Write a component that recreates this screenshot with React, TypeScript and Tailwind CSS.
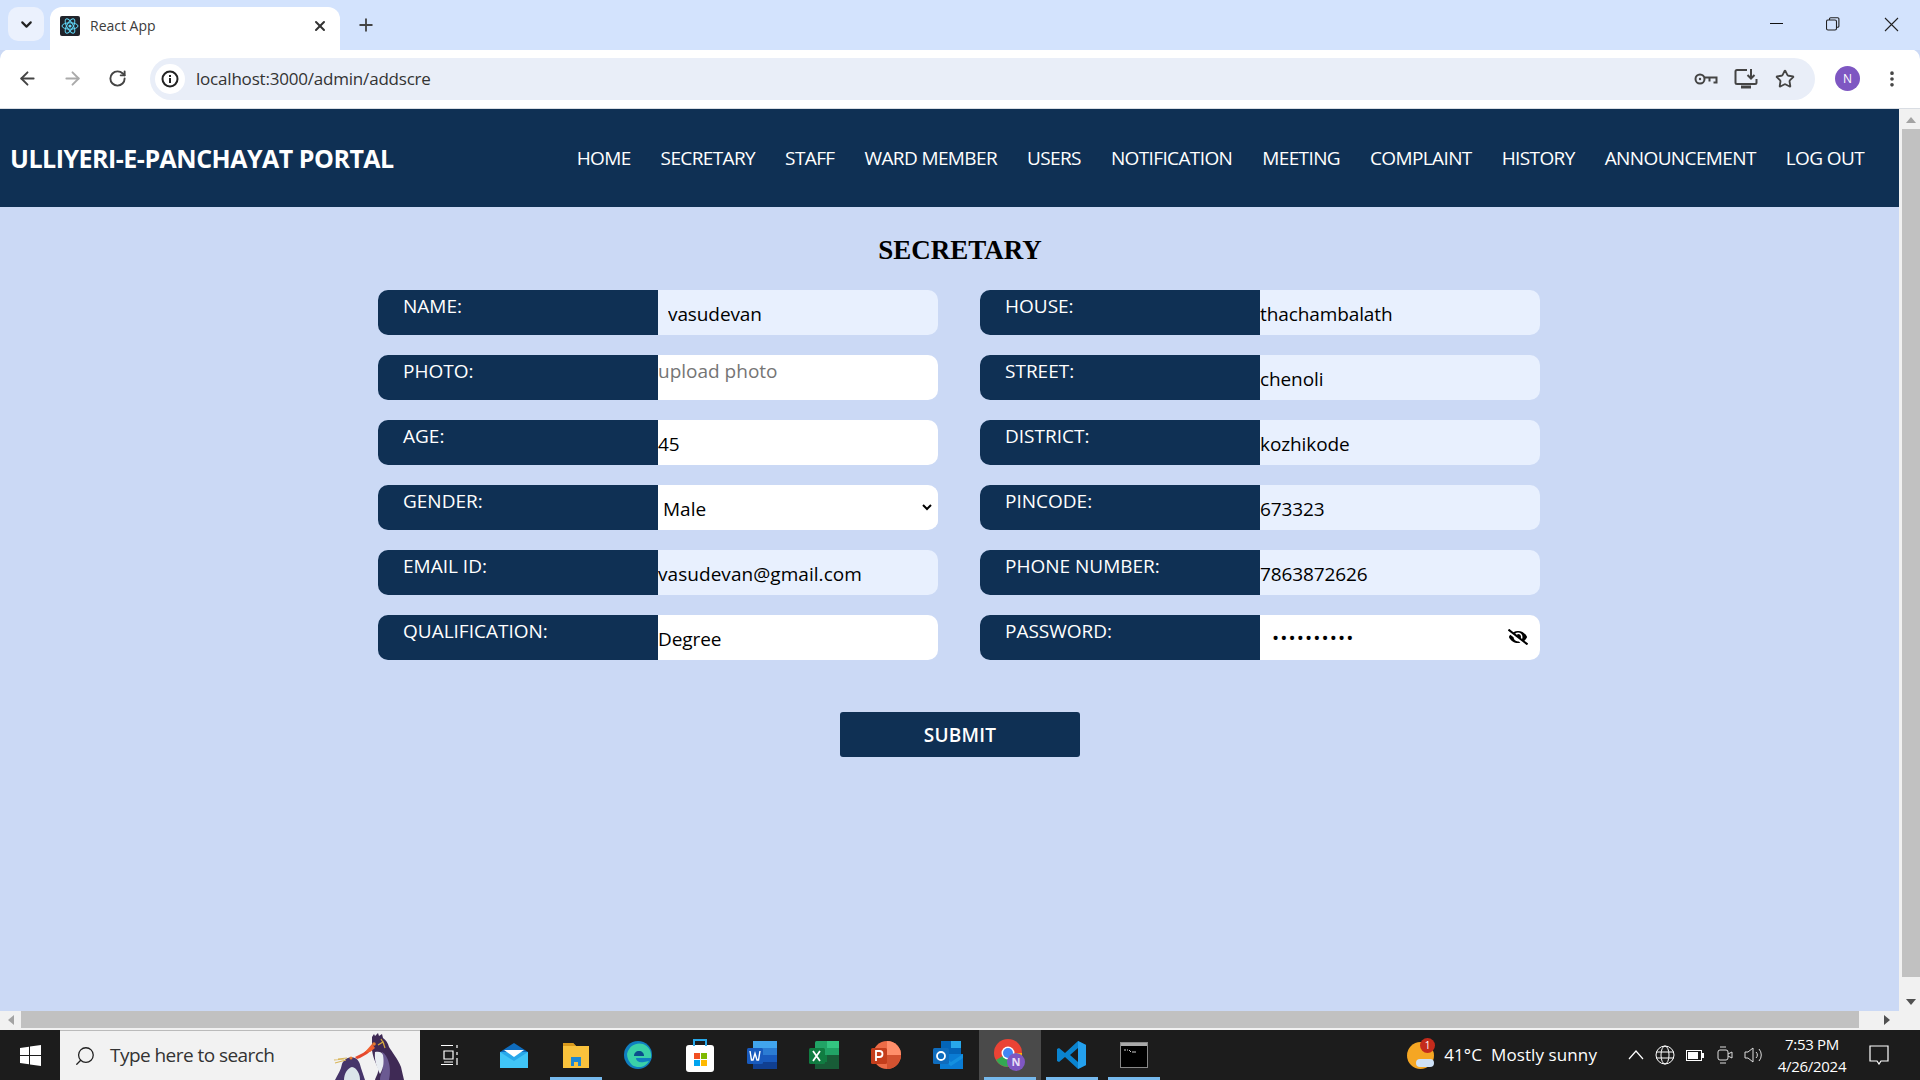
import React from "react";
import { ArrowLeft, ArrowRight, RotateCw, Plus, X, ChevronDown, Star, MoreVertical, Search } from "lucide-react";
import { FaEyeSlash } from "react-icons/fa";

const navItems = ["HOME","SECRETARY","STAFF","WARD MEMBER","USERS","NOTIFICATION","MEETING","COMPLAINT","HISTORY","ANNOUNCEMENT","LOG OUT"];

function Label({ children }: { children: React.ReactNode }) {
  return (
    <div className="w-[280px] shrink-0 bg-[#0f3054] text-white pl-[25px] pt-[3px] text-[19px] leading-[26px] tracking-[0px]">{children}</div>
  );
}

function Field({ label, value, bg, pl = "pl-0", tracking = "tracking-[-0.1px]" }: { label: string; value: string; bg: string; pl?: string; tracking?: string }) {
  return (
    <div className="flex h-[45px] w-[560px] rounded-[10px] overflow-hidden">
      <Label>{label}</Label>
      <input readOnly defaultValue={value} className={`flex-1 min-w-0 outline-none text-[19px] text-black pt-[3px] ${tracking} ${bg} ${pl}`} />
    </div>
  );
}

function Favicon() {
  return (
    <svg width="20" height="20" viewBox="0 0 20 20">
      <rect width="20" height="20" rx="2" fill="#20232a" />
      <g fill="none" stroke="#61dafb" strokeWidth="1">
        <ellipse cx="10" cy="10" rx="8" ry="3.2" />
        <ellipse cx="10" cy="10" rx="8" ry="3.2" transform="rotate(60 10 10)" />
        <ellipse cx="10" cy="10" rx="8" ry="3.2" transform="rotate(120 10 10)" />
      </g>
      <circle cx="10" cy="10" r="1.6" fill="#61dafb" />
    </svg>
  );
}

function TaskItem({ children, line, active, w = "w-[62px]" }: { children: React.ReactNode; line?: boolean; active?: boolean; w?: string }) {
  return (
    <div className={`relative h-full ${w} flex items-center justify-center ${active ? "bg-[#4a4a4a]" : ""}`}>
      {children}
      {line && <div className="absolute bottom-0 left-[5px] right-[5px] h-[3px] bg-[#76b9ed]" />}
    </div>
  );
}

export default function App() {
  return (
    <div className="h-screen w-screen overflow-hidden flex flex-col bg-[#cbd9f5] font-['Open_Sans',sans-serif]">
      {/* tab strip */}
      <div className="h-[50px] shrink-0 bg-[#d3e3fd] flex items-end relative">
        <div className="w-[36px] h-[34px] ml-[8px] mb-[9px] rounded-[10px] bg-[#ebf1fd] flex items-center justify-center">
          <ChevronDown size={17} strokeWidth={3} className="text-[#222]" />
        </div>
        <div className="w-[290px] h-[43px] ml-[6px] bg-white rounded-t-[12px] flex items-center pl-[10px] pr-[12px] pb-[6px]">
          <Favicon />
          <span className="ml-[10px] text-[14px] text-[#3c3c3c] flex-1">React App</span>
          <X size={16} strokeWidth={3} className="text-[#333]" />
        </div>
        <Plus size={20} strokeWidth={2.2} className="text-[#444] ml-[16px] mb-[15px]" />
        <div className="ml-auto flex items-center h-[50px] pb-[2px] text-[#222]">
          <svg width="14" height="2" viewBox="0 0 14 2" className="mr-[42px]"><rect width="13" height="1" fill="#111" /></svg>
          <svg width="14" height="14" viewBox="0 0 14 14" fill="none" stroke="#222" strokeWidth="1.1" className="mr-[44px]">
            <rect x="0.5" y="3" width="10" height="10" rx="1.5" />
            <path d="M3.5 3V2a1.2 1.2 0 0 1 1.2-1.2h7a1.2 1.2 0 0 1 1.2 1.2v7a1.2 1.2 0 0 1-1.2 1.2h-1.2" />
          </svg>
          <svg width="15" height="15" viewBox="0 0 15 15" stroke="#222" strokeWidth="1.1" className="mr-[21px]"><path d="M1 1l13 13M14 1L1 14" /></svg>
        </div>
      </div>
      {/* toolbar */}
      <div className="h-[60px] shrink-0 bg-white rounded-t-[10px] -mt-px flex items-center border-b border-[#d9dde3] pl-[17px] pr-[18px]">
        <ArrowLeft size={21} strokeWidth={2.2} className="text-[#444]" />
        <ArrowRight size={21} strokeWidth={2.2} className="text-[#aaa] ml-[24px]" />
        <RotateCw size={19} strokeWidth={2.4} className="text-[#444] ml-[25px]" />
        <div className="ml-[23px] h-[42px] flex-1 rounded-full bg-[#e9eef8] flex items-center pl-[5px] pr-[20px]">
          <div className="w-[30px] h-[30px] rounded-full bg-white flex items-center justify-center">
            <svg width="18" height="18" viewBox="0 0 18 18"><circle cx="9" cy="9" r="7.5" fill="none" stroke="#222" strokeWidth="2" /><rect x="8" y="8" width="2" height="5" fill="#222" /><rect x="8" y="5" width="2" height="2" fill="#222" /></svg>
          </div>
          <span className="ml-[11px] pt-px text-[17px] tracking-[-0.2px] text-[#333] flex-1">localhost:3000/admin/addscre</span>
          <svg width="24" height="16" viewBox="0 0 24 16" fill="none" stroke="#444" strokeWidth="2"><circle cx="6" cy="8" r="4.5" /><path d="M10.5 6.5h12v5h-3M15.5 6.5v4" /><circle cx="6" cy="8" r="1.2" fill="#444" stroke="none" /></svg>
          <svg width="24" height="22" viewBox="0 0 24 22" fill="none" stroke="#444" strokeWidth="2" className="ml-[16px]"><path d="M13 2H3a1.5 1.5 0 0 0-1.5 1.5v11A1.5 1.5 0 0 0 3 16h18a1.5 1.5 0 0 0 1.5-1.5V11" /><path d="M17 1v9M13.5 7l3.5 3.5L20.5 7" /><path d="M7 19h10" strokeWidth="3" /></svg>
          <Star size={20} strokeWidth={2.2} className="text-[#444] ml-[17px]" />
        </div>
        <div className="ml-[20px] w-[25px] h-[25px] rounded-full bg-[#7e57c2] text-white text-[12px] flex items-center justify-center">N</div>
        <MoreVertical size={20} strokeWidth={2.4} className="text-[#444] ml-[22px]" />
      </div>
      {/* page area */}
      <div className="flex-1 min-h-0 flex">
        <div className="flex-1 min-w-0 flex flex-col">
          <header className="h-[98px] shrink-0 bg-[#0f3054] text-white flex items-center justify-between pl-[10px] pr-[35px]">
            <div className="pt-px text-[25px] font-bold tracking-[-0.5px]">ULLIYERI-E-PANCHAYAT PORTAL</div>
            <nav className="flex gap-[30px] text-[19px] tracking-[-0.62px]">
              {navItems.map((n) => <span key={n}>{n}</span>)}
            </nav>
          </header>
          <main className="flex-1 flex flex-col items-center pl-[19px]">
            <h1 className="mt-[25px] ml-[2px] font-['Liberation_Serif',serif] font-bold text-[27px] leading-[36px] text-black">SECRETARY</h1>
            <div className="mt-[22px] flex gap-[42px]">
              <div className="flex flex-col gap-[20px]">
                <Field label="NAME:" value="vasudevan" bg="bg-[#e8f0fe]" pl="pl-[10px]" />
                <div className="flex h-[45px] w-[560px] rounded-[10px] overflow-hidden">
                  <Label>PHOTO:</Label>
                  <input readOnly placeholder="upload photo" className="flex-1 min-w-0 bg-white outline-none text-[19px] text-black pb-[13px] placeholder:text-[#757575]" />
                </div>
                <Field label="AGE:" value="45" bg="bg-white" />
                <div className="flex h-[45px] w-[560px] rounded-[10px] overflow-hidden">
                  <Label>GENDER:</Label>
                  <select className="flex-1 min-w-0 bg-white outline-none text-[19px] text-black pl-[1px] pt-[2px] border-r-[3px] border-white" defaultValue="Male" style={{ appearance: "auto" }}>
                    <option>Male</option>
                    <option>Female</option>
                  </select>
                </div>
                <Field label="EMAIL ID:" value="vasudevan@gmail.com" bg="bg-[#e8f0fe]" tracking="tracking-[0.05px]" />
                <Field label="QUALIFICATION:" value="Degree" bg="bg-white" />
              </div>
              <div className="flex flex-col gap-[20px]">
                <Field label="HOUSE:" value="thachambalath" bg="bg-[#e8f0fe]" />
                <Field label="STREET:" value="chenoli" bg="bg-[#e8f0fe]" />
                <Field label="DISTRICT:" value="kozhikode" bg="bg-[#e8f0fe]" />
                <Field label="PINCODE:" value="673323" bg="bg-[#e8f0fe]" />
                <Field label="PHONE NUMBER:" value="7863872626" bg="bg-[#e8f0fe]" />
                <div className="relative flex h-[45px] w-[560px] rounded-[10px] overflow-hidden">
                  <Label>PASSWORD:</Label>
                  <input readOnly type="password" defaultValue="vasudevan1" className="flex-1 min-w-0 bg-white outline-none text-[19px] text-black pl-[12px] pt-px tracking-[1.1px]" />
                  <FaEyeSlash size={20} className="absolute right-[12px] top-[12px] text-black" />
                </div>
              </div>
            </div>
            <button className="mt-[52px] ml-[2px] w-[240px] h-[45px] pt-[2px] rounded-[3px] bg-[#0f3054] text-white font-semibold text-[19px] tracking-[0.2px]">SUBMIT</button>
          </main>
        </div>
        <div className="w-[21px] shrink-0 bg-[#f1f1f1] flex flex-col items-center pl-[2px]">
          <svg width="10" height="6" viewBox="0 0 10 6" className="mt-[8px]"><path d="M0 6L5 0l5 6z" fill="#a3a3a3" /></svg>
          <div className="mt-[6px] w-[18px] flex-1 bg-[#c1c1c1]" />
          <svg width="10" height="6" viewBox="0 0 10 6" className="mt-[22px] mb-[6px]"><path d="M0 0l5 6 5-6z" fill="#505050" /></svg>
        </div>
      </div>
      {/* horizontal scrollbar */}
      <div className="h-[19px] shrink-0 bg-[#f1f1f1] flex items-center pb-[2px]">
        <svg width="6" height="10" viewBox="0 0 6 10" className="ml-[8px]"><path d="M6 0L0 5l6 5z" fill="#a3a3a3" /></svg>
        <div className="ml-[7px] w-[1838px] h-[17px] bg-[#c1c1c1]" />
        <svg width="6" height="10" viewBox="0 0 6 10" className="ml-[25px]"><path d="M0 0l6 5-6 5z" fill="#505050" /></svg>
      </div>
      {/* taskbar */}
      <div className="h-[50px] shrink-0 bg-[#1c1c1c] flex items-stretch text-white">
        <div className="w-[60px] flex items-center justify-center">
          <svg width="21" height="21" viewBox="0 0 21 21" fill="#fff"><path d="M0 3l9-1.3V10H0zM10 1.5L21 0v10H10zM0 11h9v8.3L0 18zM10 11h11v10l-11-1.5z" /></svg>
        </div>
        <div className="w-[360px] bg-[#f2f2f2] border-t border-[#bbb] flex items-center relative overflow-hidden">
          <Search size={22} strokeWidth={1.4} className="ml-[14px] text-[#222] -scale-x-100" />
          <span className="ml-[14px] text-[19px] tracking-[-0.55px] text-[#333]">Type here to search</span>
          <svg width="90" height="50" viewBox="0 0 90 50" className="absolute left-[270px] -top-px">
            <path d="M42 7l2-3 1 2 3-3 1 3 3-2 1 4c3 2 5 5 6 9 3 5 9 12 12 20l3 13H45c1-4 4-7 3-12-3-6-7-16-6-23z" fill="#3f2a55" />
            <path d="M52 22c6 3 10 16 7 28H50c0-6 3-8 3-14z" fill="#6b5a92" />
            <path d="M45 22c4-1 7 0 8 3 1 6 1 12-3 19-3-6-6-14-5-22z" fill="#e9edf2" />
            <path d="M5 50c3-6 6-10 7-16 2-5 8-8 13-6 4 2 5 6 6 10l4 12z" fill="#46356a" />
            <path d="M14 50c0-7 4-12 8-13 5 1 8 7 8 13z" fill="#dbe5ea" />
            <path d="M25 27l8-4 7-5 3-2-1 4-5 4-7 4-3 1z" fill="#e6492d" />
            <path d="M35 22l7-8 3 4-5 4z" fill="#f0602f" />
            <path d="M5 33l11-3M8 29l9-1M4 30l10-1" stroke="#d9b65a" strokeWidth="1.2" />
            <path d="M48 15l5-3 2 6M51 9l3 5" stroke="#d8ac3e" strokeWidth="1.2" fill="none" />
            <circle cx="44" cy="14" r="1.8" fill="#e87a2f" />
            <circle cx="21" cy="28" r="1.5" fill="#e87a2f" />
          </svg>
        </div>
        <div className="flex items-center h-full">
          <TaskItem w="w-[59px]">
            <svg width="22" height="22" viewBox="0 0 22 22" fill="none" stroke="#fff" strokeWidth="1.2"><path d="M2 1.5h12M5 7h9v8H5zM2 20.5h12M5 18h9M18 1v3M18 8v3M18 14v7" /></svg>
          </TaskItem>
          <div className="w-[4px]" />
          <TaskItem w="w-[62px]">
            <svg width="30" height="30" viewBox="0 0 30 30"><path d="M15 3l14 9v16H1V12z" fill="#0f6cbd" /><path d="M1 12h28v16H1z" fill="#28a8ea" /><path d="M1 12l14 9 14-9v16H1z" fill="#50d9ff" opacity=".6" /><path d="M5 10h20l-10 7z" fill="#fff" /></svg>
          </TaskItem>
          <TaskItem line w="w-[62px]">
            <svg width="30" height="30" viewBox="0 0 30 30"><path d="M2 3h10l3 3h13v22H2z" fill="#f9c23c" /><path d="M2 3h10l3 3H2z" fill="#d99a1c" /><path d="M10 17h10v9h-3v-4h-4v4h-3z" fill="#1e88d2" /></svg>
          </TaskItem>
          <TaskItem w="w-[62px]">
            <svg width="30" height="30" viewBox="0 0 30 30"><circle cx="15" cy="15" r="14" fill="#0f7ec0" /><path d="M4 14C6 5 14 2 20 4c6 2 9 8 8 14H13c0 3 3 5 8 4l5-1c-3 6-11 8-17 4C6 22 4 18 4 14z" fill="#3ad0a8" /><path d="M11 16c0-3 2-5 5-5s5 2 5 5z" fill="#0b4d8c" /></svg>
          </TaskItem>
          <TaskItem w="w-[62px]">
            <svg width="30" height="34" viewBox="0 0 30 34"><rect x="1" y="7" width="28" height="27" rx="3" fill="#fff" /><path d="M9 8V2h12v6" fill="none" stroke="#28a8ea" strokeWidth="2" /><rect x="9" y="15" width="6" height="6" fill="#f25022" /><rect x="16" y="15" width="6" height="6" fill="#7fba00" /><rect x="9" y="22" width="6" height="6" fill="#00a4ef" /><rect x="16" y="22" width="6" height="6" fill="#ffb900" /></svg>
          </TaskItem>
          <TaskItem w="w-[62px]">
            <svg width="30" height="30" viewBox="0 0 30 30"><rect x="6" y="1" width="24" height="28" rx="1.5" fill="#2b7cd3" /><rect x="6" y="1" width="24" height="7" fill="#41a5ee" /><rect x="6" y="15" width="24" height="7" fill="#185abd" /><rect x="6" y="22" width="24" height="7" fill="#103f91" /><rect x="0" y="8" width="16" height="16" rx="1.5" fill="#185abd" /><path d="M3 11l1.5 9h1.5L8 13.5 10 20h1.5L13 11" fill="none" stroke="#fff" strokeWidth="1.4" /></svg>
          </TaskItem>
          <TaskItem w="w-[62px]">
            <svg width="30" height="30" viewBox="0 0 30 30"><rect x="6" y="1" width="24" height="28" rx="1.5" fill="#21a366" /><rect x="18" y="1" width="12" height="7" fill="#33c481" /><rect x="6" y="15" width="12" height="7" fill="#107c41" /><rect x="18" y="15" width="12" height="7" fill="#185c37" /><rect x="6" y="22" width="24" height="7" fill="#185c37" /><rect x="0" y="8" width="16" height="16" rx="1.5" fill="#107c41" /><path d="M4 11l7 10M11 11l-7 10" stroke="#fff" strokeWidth="1.8" /></svg>
          </TaskItem>
          <TaskItem w="w-[62px]">
            <svg width="30" height="30" viewBox="0 0 30 30"><circle cx="16" cy="15" r="14" fill="#ed6c47" /><path d="M16 1a14 14 0 0 1 14 14H16z" fill="#ff8f6b" /><path d="M16 15h14a14 14 0 0 1-14 14z" fill="#d35230" /><rect x="0" y="8" width="16" height="16" rx="1.5" fill="#c43e1c" /><path d="M5 21V11h3.5a3 3 0 0 1 0 6H5" fill="none" stroke="#fff" strokeWidth="1.8" /></svg>
          </TaskItem>
          <TaskItem w="w-[62px]">
            <svg width="30" height="30" viewBox="0 0 30 30"><rect x="8" y="1" width="20" height="14" fill="#0364b8" /><rect x="18" y="1" width="10" height="7" fill="#28a8ea" /><path d="M7 14h23v15H7z" fill="#0a7cd4" /><path d="M7 14l11 8 12-8v4l-12 8-11-8z" fill="#1490df" /><rect x="0" y="8" width="16" height="16" rx="1.5" fill="#0f6cbd" /><circle cx="8" cy="16" r="4" fill="none" stroke="#fff" strokeWidth="1.8" /></svg>
          </TaskItem>
          <TaskItem line active w="w-[62px]">
            <svg width="32" height="34" viewBox="0 0 32 34"><circle cx="14" cy="15" r="14" fill="#ea4335" /><path d="M14 15L2 22A14 14 0 0 0 14 29z" fill="#34a853" /><path d="M14 15h14a14 14 0 0 1-7 12z" fill="#fbbc04" /><circle cx="14" cy="15" r="6.5" fill="#fff" /><circle cx="14" cy="15" r="5" fill="#4285f4" /><circle cx="22" cy="24" r="9" fill="#7e57c2" /><text x="22" y="28" fontSize="11" fontWeight="700" fill="#e8def8" textAnchor="middle" fontFamily="Open Sans">N</text></svg>
          </TaskItem>
          <TaskItem line w="w-[62px]">
            <svg width="30" height="30" viewBox="0 0 30 30"><path d="M21 1l8 4v20l-8 4-13-12-6 5-2-1V9l2-1 6 5zM21 8l-8 7 8 7z" fill="#0a84d0" /><path d="M21 1l8 4v20l-8 4z" fill="#24a0ed" /></svg>
          </TaskItem>
          <TaskItem line w="w-[62px]">
            <svg width="28" height="26" viewBox="0 0 28 26"><rect x="0.5" y="0.5" width="27" height="25" fill="#000" stroke="#888" /><rect x="1" y="1" width="26" height="3" fill="#aaa" /><path d="M4 8h2M7 8h1M9 8l2 2M12 10h4" stroke="#ccc" /></svg>
          </TaskItem>
        </div>
        <div className="ml-auto flex items-center h-full">
          <div className="relative w-[28px] h-[28px]">
            <div className="absolute left-0 top-[1px] w-[27px] h-[27px] rounded-full bg-[#f5a623]" />
            <div className="absolute left-[9px] top-[18px] w-[18px] h-[8px] rounded-full bg-[#cfe2f7]" />
            <div className="absolute left-[13px] -top-[3px] w-[15px] h-[15px] rounded-full bg-[#c42b1c] text-[10px] leading-[15px] text-center">1</div>
          </div>
          <span className="ml-[9px] text-[17px] tracking-[0.1px] whitespace-nowrap">41°C&nbsp; Mostly sunny</span>
          <svg width="16" height="10" viewBox="0 0 16 10" fill="none" stroke="#fff" strokeWidth="1.2" className="ml-[31px]"><path d="M1 9l7-8 7 8" /></svg>
          <svg width="20" height="20" viewBox="0 0 20 20" fill="none" stroke="#fff" strokeWidth="1" className="ml-[11px]"><circle cx="10" cy="10" r="9" /><ellipse cx="10" cy="10" rx="4" ry="9" /><path d="M1 7h18M1 13h18" /></svg>
          <svg width="18" height="11" viewBox="0 0 18 11" className="ml-[11px]"><rect x="0.5" y="0.5" width="15" height="10" fill="none" stroke="#fff" /><rect x="2" y="2" width="10" height="7" fill="#fff" /><rect x="16" y="3" width="2" height="5" fill="#fff" /></svg>
          <svg width="16" height="20" viewBox="0 0 16 20" fill="none" stroke="#ddd" strokeWidth="1" className="ml-[13px]"><rect x="1" y="5" width="10" height="10" rx="2" /><path d="M11 9l4-2v6l-4-2M3 2h6M3 18h6" /></svg>
          <svg width="20" height="18" viewBox="0 0 20 18" fill="none" stroke="#ddd" strokeWidth="1" className="ml-[11px]"><path d="M1 6h3l5-4v14l-5-4H1zM12 6a4 4 0 0 1 0 6M15 3a9 9 0 0 1 0 12" /></svg>
          <div className="ml-[12px] w-[72px] text-center text-[15px] leading-[22px] tracking-[-0.3px]">
            <div>7:53 PM</div>
            <div>4/26/2024</div>
          </div>
          <svg width="20" height="20" viewBox="0 0 20 20" fill="none" stroke="#fff" strokeWidth="1.2" className="ml-[21px] mr-[31px]"><path d="M1 1h18v15h-7l-2 3-2-3H1z" /></svg>
        </div>
      </div>
    </div>
  );
}
